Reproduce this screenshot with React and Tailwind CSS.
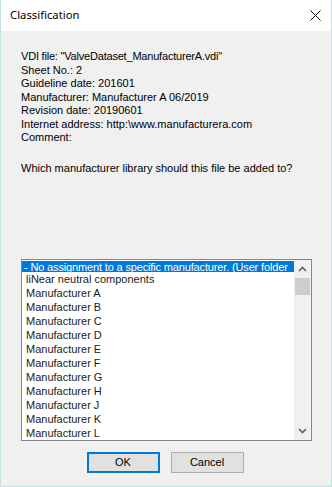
import React from "react";

const items = [
  "liNear neutral components",
  "Manufacturer A",
  "Manufacturer B",
  "Manufacturer C",
  "Manufacturer D",
  "Manufacturer E",
  "Manufacturer F",
  "Manufacturer G",
  "Manufacturer H",
  "Manufacturer J",
  "Manufacturer K",
  "Manufacturer L",
];

export default function App() {
  return (
    <div
      className="w-[332px] h-[487px] flex flex-col border-x border-b border-[#c6dfe0] bg-[#f0f0f0] text-black"
      style={{ fontFamily: '"Liberation Sans", Arial, sans-serif' }}
    >
      <div className="h-[31px] bg-white flex items-center justify-between pl-[9px] pr-[10px]">
        <span className="text-[11.3px] text-black" style={{ fontFamily: '"Noto Sans", sans-serif' }}>
          Classification
        </span>
        <svg width="11" height="11" viewBox="0 0 11 11">
          <path d="M0.5 0.5 L10.5 10.5 M10.5 0.5 L0.5 10.5" stroke="#000" strokeWidth="1" fill="none" />
        </svg>
      </div>
      <div className="flex-1 flex flex-col pl-[20px] pr-[20px] pt-[19px]">
        <div className="text-[11px] leading-[13.5px]">
          <div className="tracking-[-0.2px]">VDI file: "ValveDataset_ManufacturerA.vdi"</div>
          <div>Sheet No.: 2</div>
          <div>Guideline date: 201601</div>
          <div>Manufacturer: Manufacturer A 06/2019</div>
          <div>Revision date: 20190601</div>
          <div>Internet address: http:\www.manufacturera.com</div>
          <div>Comment:</div>
        </div>
        <div className="text-[11px] leading-[13px] mt-[17px]">Which manufacturer library should this file be added to?</div>
        <div className="mt-[84px] w-[291px] h-[182px] border border-[#828790] bg-white flex overflow-hidden">
          <div className="flex-1 flex flex-col pt-[1px] text-[11px] overflow-hidden">
            <div className="h-[13px] leading-[13px] bg-[#0078d7] text-white pl-[2px] whitespace-nowrap overflow-hidden tracking-[-0.15px]">
              - No assignment to a specific manufacturer. (User folder
            </div>
            {items.map((t) => (
              <div key={t} className="h-[14px] leading-[14px] pl-[4px] whitespace-nowrap text-[#1a1a1a]">
                {t}
              </div>
            ))}
          </div>
          <div className="w-[17px] bg-[#f0f0f0] flex flex-col items-center pt-[1px]">
            <div className="h-[17px] w-full flex items-center justify-center">
              <svg width="9" height="6" viewBox="0 0 9 6">
                <path d="M1 5 L4.5 1.5 L8 5" stroke="#606060" strokeWidth="1.6" fill="none" />
              </svg>
            </div>
            <div className="w-[15px] h-[17px] bg-[#cdcdcd]" />
            <div className="flex-1" />
            <div className="h-[17px] w-full flex items-center justify-center">
              <svg width="9" height="6" viewBox="0 0 9 6">
                <path d="M1 1 L4.5 4.5 L8 1" stroke="#606060" strokeWidth="1.6" fill="none" />
              </svg>
            </div>
          </div>
        </div>
        <div className="mt-[11px] flex justify-center gap-[11px] pr-[2px]">
          <button className="w-[73px] h-[21px] border-2 border-[#0078d7] bg-[#e1e1e1] text-[11px] text-black flex items-center justify-center">
            OK
          </button>
          <button className="w-[73px] h-[21px] border border-[#adadad] bg-[#e1e1e1] text-[11px] text-black flex items-center justify-center">
            Cancel
          </button>
        </div>
      </div>
    </div>
  );
}
